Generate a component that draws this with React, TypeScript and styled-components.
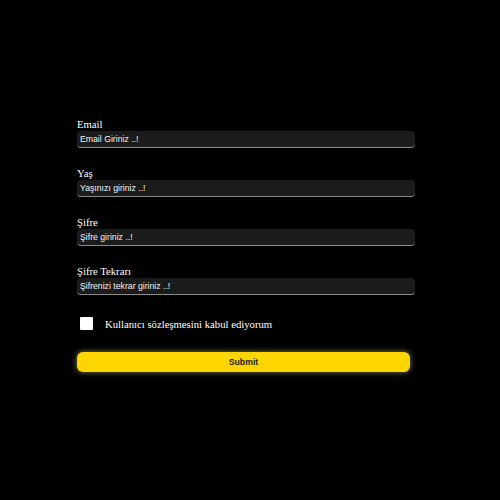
import React from "react";
import styled, { createGlobalStyle } from "styled-components";

const Global = createGlobalStyle`
  html, body { margin: 0; padding: 0; background: #000; }
  body { width: 500px; height: 500px; overflow: hidden; }
`;

const Page = styled.div`
  width: 500px;
  height: 500px;
  background: #000;
  box-sizing: border-box;
  padding: 117px 0 0 77px;
`;

const Form = styled.form`
  width: 338px;
  display: flex;
  flex-direction: column;
`;

const Field = styled.div`
  display: flex;
  flex-direction: column;
  margin-bottom: 18px;
`;

const Label = styled.label`
  font-family: "Liberation Serif", "Times New Roman", serif;
  font-size: 10.7px;
  line-height: 14px;
  color: #fff;
`;

const Input = styled.input`
  box-sizing: border-box;
  width: 338px;
  height: 17px;
  margin: 0;
  padding: 0 3px;
  border: none;
  border-bottom: 1px solid #8a8a8a;
  border-radius: 4px;
  background: #1b1b1b;
  color: #fff;
  font-family: "Liberation Sans", Arial, sans-serif;
  font-size: 8.7px;
  outline: none;
  &::placeholder { color: #f2f2f2; opacity: 1; }
`;

const CheckRow = styled.div`
  display: flex;
  align-items: center;
  gap: 12px;
  padding-left: 3px;
  margin-top: 4px;
  height: 13px;
`;

const Box = styled.span`
  width: 13px;
  height: 13px;
  background: #fff;
  border-radius: 1px;
  flex: none;
`;

const CheckText = styled.span`
  font-family: "Liberation Serif", "Times New Roman", serif;
  font-size: 10.7px;
  color: #fff;
`;

const Submit = styled.button`
  margin-top: 22px;
  width: 333px;
  height: 20px;
  border: none;
  border-radius: 6px;
  background: #fdd602;
  color: #222;
  font-family: "Liberation Sans", Arial, sans-serif;
  font-weight: bold;
  font-size: 8.7px;
  box-shadow: 0 0 5px 1px rgba(170, 170, 130, 0.55);
  padding: 0;
`;

const fields = [
  { label: "Email", ph: "Email Giriniz ..!" },
  { label: "Yaş", ph: "Yaşınızı giriniz ..!" },
  { label: "Şifre", ph: "Şifre giriniz ..!" },
  { label: "Şifre Tekrarı", ph: "Şifrenizi tekrar giriniz ..!" },
];

export default function App() {
  return (
    <Page>
      <Global />
      <Form onSubmit={(e) => e.preventDefault()}>
        {fields.map((f) => (
          <Field key={f.label}>
            <Label>{f.label}</Label>
            <Input placeholder={f.ph} />
          </Field>
        ))}
        <CheckRow>
          <Box />
          <CheckText>Kullanıcı sözleşmesini kabul ediyorum</CheckText>
        </CheckRow>
        <Submit type="submit">Submit</Submit>
      </Form>
    </Page>
  );
}
